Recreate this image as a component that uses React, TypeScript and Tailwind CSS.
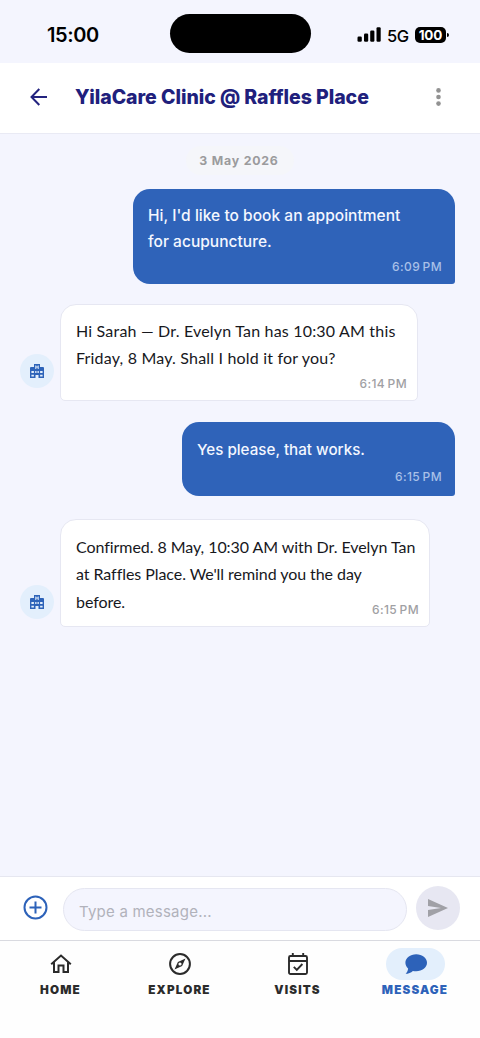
import React from "react"

interface Message {
  id: number;
  from: "me" | "clinic";
  lines: string[];
  time: string;
  bubbleClass: string;
  textClass: string;
  timeClass: string;
  avatarClass?: string;
}

const messages: Message[] = [
  {
    id: 1,
    from: "me",
    lines: ["Hi, I'd like to book an appointment", "for acupuncture."],
    time: "6:09 PM",
    bubbleClass: "w-[322px] h-[95px] pt-[14px]",
    textClass: "leading-[25.5px] text-[15.5px] tracking-[0.03px]",
    timeClass: "right-[13px] bottom-[9px]",
  },
  {
    id: 2,
    from: "clinic",
    lines: ["Hi Sarah — Dr. Evelyn Tan has 10:30 AM this", "Friday, 8 May. Shall I hold it for you?"],
    time: "6:14 PM",
    bubbleClass: "w-[358px] h-[97px] mt-5 pt-[12px]",
    textClass: "leading-[27px] tracking-[0.19px]",
    timeClass: "right-[10px] bottom-[8px]",
    avatarClass: "mb-[13px]",
  },
  {
    id: 3,
    from: "me",
    lines: ["Yes please, that works."],
    time: "6:15 PM",
    bubbleClass: "w-[273px] h-[74px] mt-[21px] pt-[15px]",
    textClass: "leading-[26px] text-[15.2px]",
    timeClass: "right-[13px] bottom-[11px]",
  },
  {
    id: 4,
    from: "clinic",
    lines: ["Confirmed. 8 May, 10:30 AM with Dr. Evelyn Tan", "at Raffles Place. We'll remind you the day", "before."],
    time: "6:15 PM",
    bubbleClass: "w-[370px] h-[108px] mt-[23px] pt-[13px]",
    textClass: "leading-[27.3px] tracking-[-0.06px]",
    timeClass: "right-[10px] bottom-[8px]",
    avatarClass: "mb-[8px]",
  },
];

function StatusBar() {
  return (
    <div className="flex h-[63px] shrink-0 items-start bg-[#f4f5fe] pl-[47px] text-black">
      <span className="mt-[22px] w-[123px] text-[20px] font-semibold leading-[26px] tracking-[-0.4px]">15:00</span>
      <div className="mt-[14px] h-[39px] w-[141px] rounded-full bg-black" />
      <svg className="ml-[46px] mt-[27px]" width="24" height="15" viewBox="0 0 24 15">
        <rect x="0.5" y="9.5" width="4.3" height="5.2" rx="1.2" />
        <rect x="7" y="6.5" width="4.2" height="8.2" rx="1.2" />
        <rect x="13.2" y="3.5" width="4.2" height="11.2" rx="1.2" />
        <rect x="19.5" y="0.2" width="4.2" height="14.5" rx="1.2" />
      </svg>
      <span className="ml-[6px] mt-[26px] w-[22px] text-[16.5px] font-medium leading-5 tracking-[-0.5px]">5G</span>
      <div className="ml-[6px] mt-[27px] flex h-4 w-[31px] items-center justify-center rounded-[5px] bg-black text-[13.5px] font-bold leading-4 tracking-[-0.1px] text-white">
        100
      </div>
      <div className="ml-px mt-[33px] h-[4px] w-[2px] rounded-r-full bg-black" />
    </div>
  )
}

function Header() {
  return (
    <header className="flex h-[71px] shrink-0 items-center border-b border-[#e9eaf4] bg-white pb-[2px] pl-[30px] pr-[39px]">
      <svg width="18" height="18" viewBox="0 0 18 18" fill="none" stroke="#23237f" strokeWidth="2">
        <path d="M17 9H1.8M9.3 1L1.5 9l7.8 8" />
      </svg>
      <h1 className="ml-[27px] flex-1 whitespace-nowrap text-[19.5px] font-extrabold leading-7 tracking-[-0.05px] text-[#20207c]">
        YilaCare Clinic @ Raffles Place
      </h1>
      <svg width="5" height="18" viewBox="0 0 5 18" fill="#929292">
        <circle cx="2.5" cy="2.4" r="2.3" />
        <circle cx="2.5" cy="9" r="2.3" />
        <circle cx="2.5" cy="15.6" r="2.3" />
      </svg>
    </header>
  )
}

function ClinicAvatar({ className = "" }: { className?: string }) {
  return (
    <div className={`flex h-[34px] w-[34px] shrink-0 items-center justify-center rounded-full bg-[#e3effc] ${className}`}>
      <svg width="14" height="14" viewBox="0 0 14 14">
        <path fill="#2d63b9" d="M4 0h6v3h3a1 1 0 0 1 1 1v10H8.500v-3h-3v3H0V4a1 1 0 0 1 1-1h3z" />
        <path fill="#e3effc" d="M5.3 1.4h1v1.200h1.400V1.400h1v3.600h-1V3.600H6.300v1.400h-1zM1.400 7h2.500v2H1.400zM5.200 7h1.300v2H5.200zM7.500 7h1.300v2H7.500zM10.100 7h2.500v2h-2.500zM1.400 10.700h2.500v1.900H1.400zM10.100 10.700h2.500v1.900h-2.500z" />
      </svg>
    </div>
  )
}

function Bubble({ message }: { message: Message }) {
  const mine = message.from === "me";
  return (
    <div className={`flex items-end ${mine ? "justify-end pr-[25px]" : "gap-[6px] pl-5"}`}>
      {!mine && <ClinicAvatar className={message.avatarClass} />}
      <div
        className={`relative shrink-0 whitespace-nowrap pl-[15px] ${message.bubbleClass} ${
          mine
            ? "rounded-[17px] rounded-br-[3px] bg-[#2f63b9] text-[#f4f7ff]"
            : "rounded-t-[16px] rounded-b-[5px] border border-[#e6e7f2] bg-white text-[#17181d]"
        }`}
      >
        {message.lines.map((line) => (
          <p
            key={line}
            className={`${message.textClass} ${
              mine ? "font-medium" : "font-['Lato',sans-serif] text-[16px]"
            }`}
          >
            {line}
          </p>
        ))}
        <span
          className={`absolute text-[12px] font-medium leading-4 tracking-[0.4px] [word-spacing:-1.2px] ${message.timeClass} ${
            mine ? "text-[#a9c0e8]" : "text-[#a0a0a3]"
          }`}
        >
          {message.time}
        </span>
      </div>
    </div>
  )
}

function Composer() {
  return (
    <div className="flex h-[64px] shrink-0 items-start border-t border-[#e6e7f0] bg-white pl-[23px]">
      <svg className="mt-[18px]" width="25" height="25" viewBox="0 0 25 25" fill="none" stroke="#2d62b9" strokeWidth="2">
        <circle cx="12.5" cy="12.5" r="11" />
        <path d="M12.5 6.5v12M6.5 12.5h12" />
      </svg>
      <div className="ml-[15px] mt-[11px] h-[43px] w-[344px] rounded-full border border-[#e5e6f1] bg-[#f4f5fe] pl-[15px] text-[15px] leading-[45px] tracking-[0.22px] text-[#b1b2bb]">
        Type a message...
      </div>
      <div className="ml-[9px] mt-[9px] flex h-[44px] w-[44px] items-center justify-center rounded-full bg-[#e7e7f2]">
        <svg width="20" height="18" viewBox="0 0 20 18" fill="#a0a0a6">
          <path d="M0 0l20 9L0 18v-7l13-2L0 7z" />
        </svg>
      </div>
    </div>
  )
}

const tabs = [
  {
    label: "HOME",
    className: "w-[120px]",
    icon: (
      <svg width="22" height="20" viewBox="0 0 22 20" fill="none" stroke="#2b2b2b" strokeWidth="2">
        <path d="M1.2 10.2L11 1.5l9.8 8.7M4 8.5V18h4.5v-6.5h5V18H18V8.5" />
      </svg>
    ),
  },
  {
    label: "EXPLORE",
    className: "w-[118px]",
    icon: (
      <svg width="22" height="22" viewBox="0 0 22 22" fill="none" stroke="#2b2b2b" strokeWidth="2">
        <circle cx="11" cy="11" r="9.9" />
        <path fill="#2b2b2b" stroke="none" fillRule="evenodd" d="M16.5 5.5l-3.4 7.6-7.6 3.4 3.4-7.6zM11 9.4a1.6 1.6 0 1 0 0 3.2 1.6 1.6 0 0 0 0-3.2z" />
      </svg>
    ),
  },
  {
    label: "VISITS",
    className: "w-[118px]",
    icon: (
      <svg width="20" height="22" viewBox="0 0 20 22" fill="none" stroke="#2b2b2b" strokeWidth="1.9">
        <rect x="1" y="3" width="18" height="18" rx="1.5" />
        <path d="M1 8h18M4.8 0v4M15.2 0v4M5.8 13.8l3 3 5.6-5.8" />
      </svg>
    ),
  },
  {
    label: "MESSAGE",
    className: "w-[117px]",
    icon: (
      <svg width="22" height="20" viewBox="0 0 22 20" fill="#2d62b9">
        <path d="M11.2 0.3C17.2 0.3 22 4 22 8.800s-4.800 8.500-10.800 8.500c-1.200 0-2.300-.1-3.300-.4C6 18.600 3.200 19.700.6 19.800c1.300-1.200 2.400-3.200 2.500-5.300C1.400 13 .4 11 .4 8.800.4 4 5.200.3 11.200.3z" />
      </svg>
    ),
  },
];

function TabBar() {
  return (
    <nav className="flex h-[98px] shrink-0 border-t border-[#d9dae0] bg-[#fefefe]">
      {tabs.map((tab) => {
        const active = tab.label === "MESSAGE";
        return (
          <div key={tab.label} className={`flex flex-col items-center pl-[2px] pt-[7px] ${tab.className}`}>
            <div className={`flex h-8 w-[59px] items-center justify-center rounded-full ${active ? "bg-[#e3effc]" : ""}`}>
              {tab.icon}
            </div>
            <span
              className={`mt-[2px] pr-px text-[11.7px] font-black leading-4 tracking-[1.15px] ${
                active ? "text-[#2d62b9]" : "text-[#2b2b2b]"
              }`}
            >
              {tab.label}
            </span>
          </div>
        )
      })}
    </nav>
  )
}

export default function App() {
  return (
    <div className="flex h-[1038px] w-[480px] flex-col overflow-hidden bg-[#f4f5fe] font-['Inter',sans-serif]">
      <StatusBar />
      <Header />
      <main className="flex-1">
        <div className="mx-auto mb-[14px] mt-[12px] flex h-[29px] w-[108px] items-center justify-center rounded-full bg-[#f5f6fa] pr-[2px] pt-px text-[12.3px] font-bold tracking-[0.8px] text-[#9b9b9d]">
          3 May 2026
        </div>
        {messages.map((message) => (
          <Bubble key={message.id} message={message} />
        ))}
      </main>
      <Composer />
      <TabBar />
    </div>
  )
}
